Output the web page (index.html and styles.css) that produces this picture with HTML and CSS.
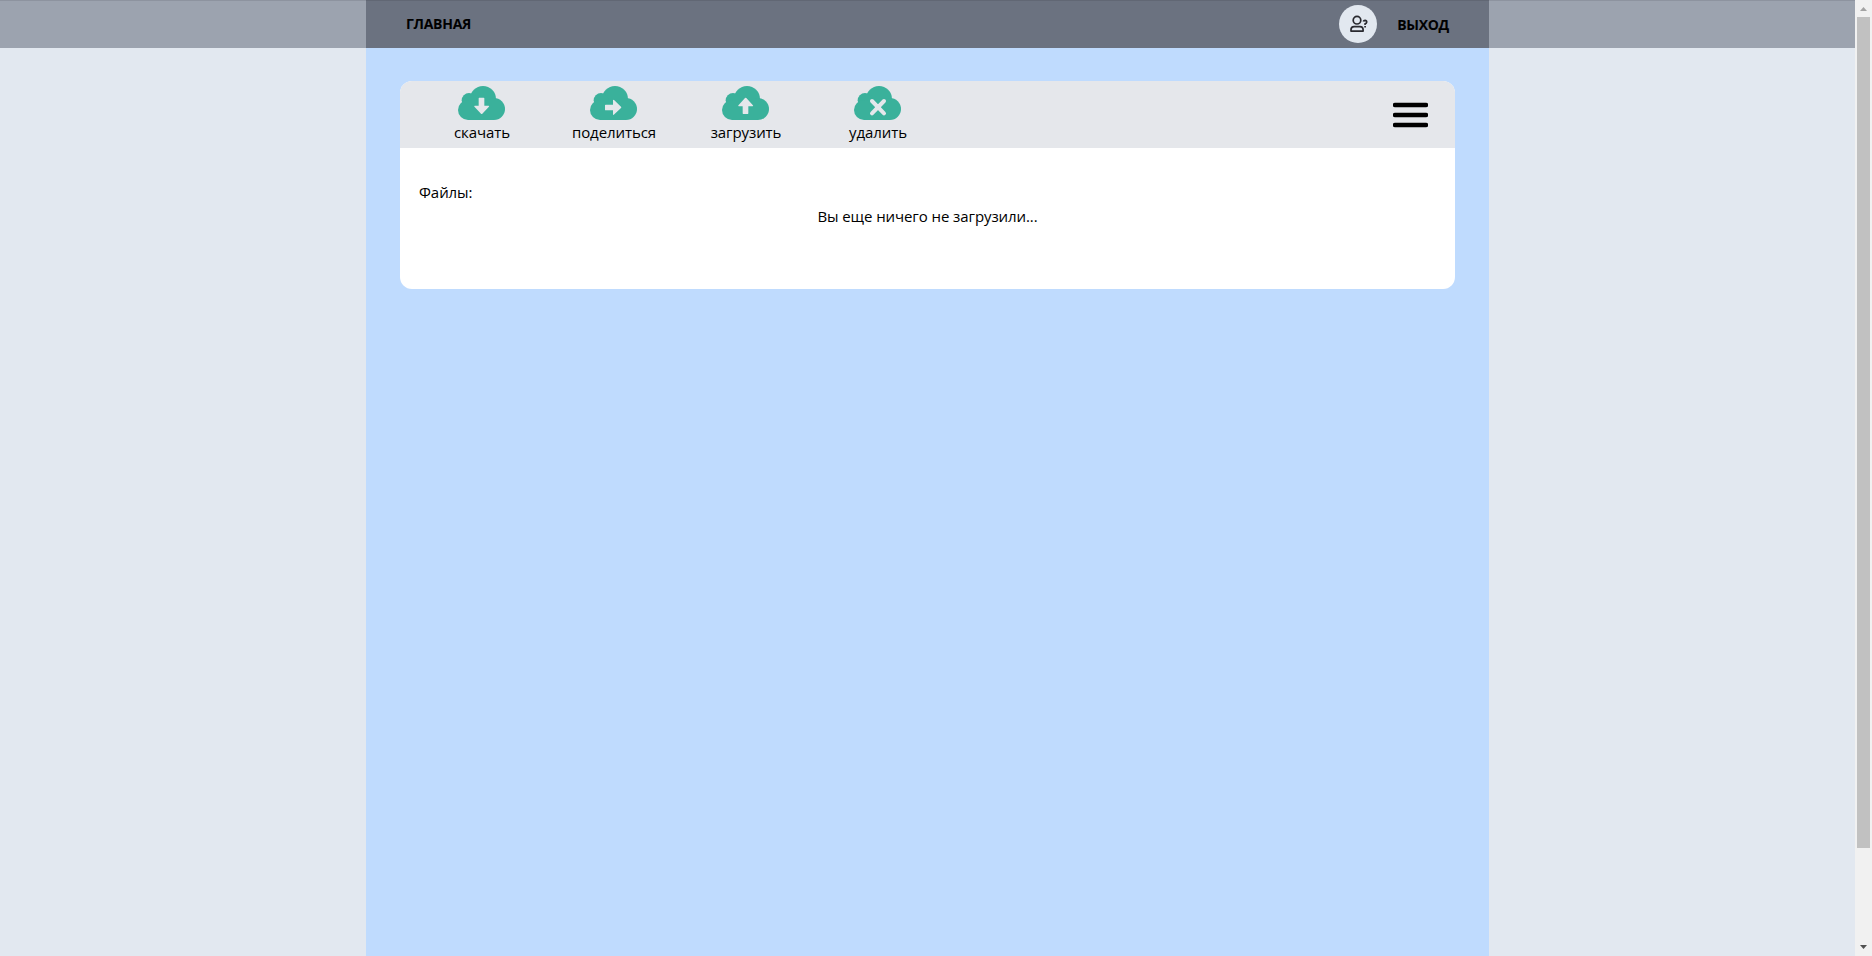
FILE: index.html
```html
<!DOCTYPE html>
<html lang="ru">
<head>
<meta charset="utf-8">
<title>Файлы</title>
<link rel="stylesheet" href="styles.css">
</head>
<body>
<svg class="defs" aria-hidden="true">
  <symbol id="cloud" viewBox="0 0 141 102">
    <circle cx="75" cy="39" r="39"/><circle cx="33" cy="43" r="22"/><circle cx="30" cy="72" r="30"/><circle cx="108" cy="69" r="33"/><path d="M30 45H108V102H30Z"/>
  </symbol>
</svg>
<div class="window">
  <div class="page">
    <div class="side"><div class="bar"></div></div>
    <main class="main">
      <header class="bar header">
        <a class="home">ГЛАВНАЯ</a>
        <div class="account">
          <span class="avatar">
            <svg width="18" height="18" viewBox="0 0 18 18" fill="none" stroke="#29292f" stroke-width="1.7">
              <circle cx="7" cy="5.2" r="3.8"/>
              <path d="M1 16.1V14.8Q1 11.7 4.2 11.7H10Q13.1 11.7 13.1 14.8V16.1Z" stroke-linejoin="round"/>
              <path d="M13.3 6.6Q13.7 5.4 15 5.4Q16.8 5.5 16.7 7.1Q16.5 8.3 15.1 8.9V10M15.1 11V12.4"/>
            </svg>
          </span>
          <a class="exit">ВЫХОД</a>
        </div>
      </header>
      <section class="card">
        <div class="toolbar">
          <div class="tools">
            <div class="tool">
              <svg class="cloud" viewBox="0 0 141 102"><use href="#cloud"/><path class="glyph" d="M64 35H77Q79 35 79 37V59H91Q96 59 92 63L73 83Q71 85 69 83L50 63Q46 59 51 59H62V37Q62 35 64 35Z"/></svg>
              <span class="label download">скачать</span>
            </div>
            <div class="tool">
              <svg class="cloud" viewBox="0 0 141 102"><use href="#cloud"/><path class="glyph" transform="rotate(-90 70 64) translate(0 4)" d="M63 35H76Q78 35 78 37V59H90Q95 59 91 63L72 83Q70 85 68 83L49 63Q45 59 50 59H61V37Q61 35 63 35Z"/></svg>
              <span class="label share">поделиться</span>
            </div>
            <div class="tool">
              <svg class="cloud" viewBox="0 0 141 102"><use href="#cloud"/><path class="glyph" d="M64 84H77Q79 84 79 82V61H91Q96 61 92 57L73 36Q71 34 69 36L50 57Q46 61 51 61H62V82Q62 84 64 84Z"/></svg>
              <span class="label upload">загрузить</span>
            </div>
            <div class="tool">
              <svg class="cloud" viewBox="0 0 141 102"><use href="#cloud"/><path class="cross" d="M54 45L90 82M90 45L54 82"/></svg>
              <span class="label remove">удалить</span>
            </div>
          </div>
          <svg class="menu" width="35" height="27" viewBox="0 0 35 27"><path d="M2 3H33M2 13H33M2 23H33" stroke="#000" stroke-width="4.4" stroke-linecap="round"/></svg>
        </div>
        <div class="content">
          <p class="title"><span>Файлы:</span></p>
          <p class="empty"><span>Вы еще ничего не загрузили...</span></p>
        </div>
      </section>
    </main>
    <div class="side"><div class="bar"></div></div>
  </div>
  <div class="scrollbar">
    <svg width="7" height="4" viewBox="0 0 7 4"><path d="M0 4L3.5 0L7 4Z" fill="#a3a3a3"/></svg>
    <div class="thumb"></div>
    <svg class="down" width="7" height="4" viewBox="0 0 7 4"><path d="M0 0L3.5 4L7 0Z" fill="#505050"/></svg>
  </div>
</div>
</body>
</html>
```
FILE: styles.css
```css
* { box-sizing: border-box; }
body { margin: 0; overflow: hidden; font: 15px/24px "Open Sans", "Noto Sans", sans-serif; letter-spacing: -0.08px; color: #000; }
p { margin: 0; }
.defs { display: none; }
.window { display: flex; height: 956px; }
.page { flex: 1; display: grid; grid-template-columns: 366px 1123px 366px; background: #e2e8f0; }
.bar { height: 48px; background: #9ca3af; border-top: 1px solid #8d939f; }
.main { background: #bfdbfe; }
.header { display: flex; justify-content: space-between; align-items: center; padding: 0 40px 1px; background: #6b7280; border-top-color: #616774; font-size: 14px; font-weight: 700; letter-spacing: -0.28px; }
.account { display: flex; align-items: center; gap: 20px; }
.exit { padding-top: 1px; }
.avatar { display: flex; align-items: center; justify-content: center; width: 38px; height: 38px; border-radius: 50%; background: #e2e8f0; }
.avatar svg { margin-left: 2px; }
.card { margin: 33px 34px 0; height: 208px; border-radius: 12px; background: #fff; overflow: hidden; }
.toolbar { display: flex; justify-content: space-between; height: 67px; padding: 5px 27px 0 16px; background: #e5e7eb; }
.tools { display: flex; }
.tool { display: flex; flex-direction: column; align-items: center; width: 132px; }
.cloud { width: 47px; height: 34px; margin-right: 1px; fill: #3ab19b; }
.glyph { fill: #e5e7eb; }
.cross { fill: none; stroke: #e5e7eb; stroke-width: 12; stroke-linecap: round; }
.menu { margin-top: 16px; }
.content { padding: 32px 19px; }
.empty { text-align: center; }
.scrollbar { display: flex; flex-direction: column; align-items: center; width: 17px; padding: 7px 0; background: #f1f1f1; }
.thumb { width: 13px; height: 831px; margin-top: 6px; background: #c1c1c1; }
.down { margin-top: auto; }
```
